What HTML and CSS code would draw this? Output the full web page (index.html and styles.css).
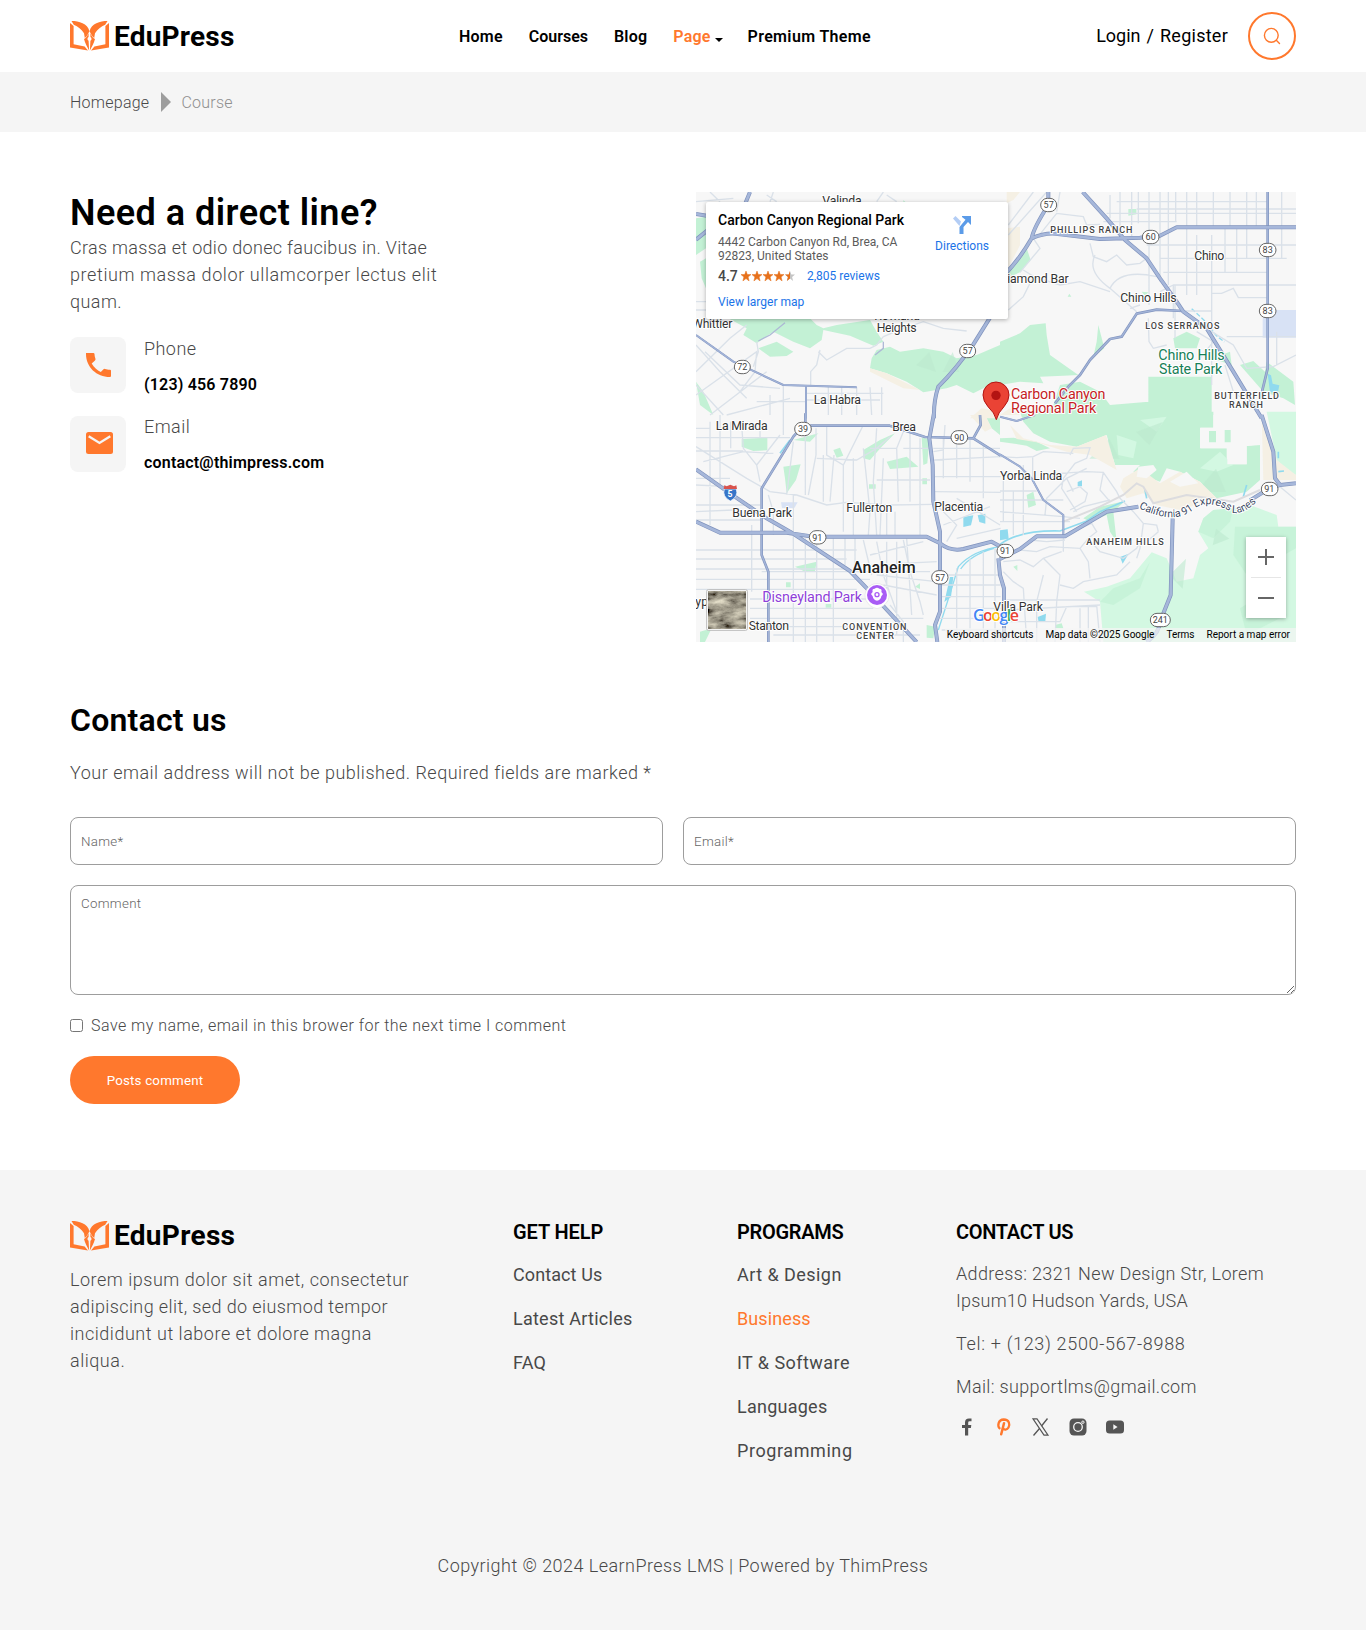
FILE: index.html
```html
<!DOCTYPE html>
<html lang="en">
<head>
<meta charset="utf-8">
<title>EduPress - Contact</title>
<link rel="stylesheet" href="styles.css">
</head>
<body>
<svg width="0" height="0" class="defs">
  <symbol id="book" viewBox="0 0 39 30">
    <g id="half" fill="#ff782d">
      <path d="M0 2 3.600 5V23.200L14.600 25.600 18 29.600 0 26.500Z"/>
      <path d="M1.500 0C9 0 17.500 2.500 19.500 10.200 18 12.300 17.500 15 14.800 17L14 12.200C11.500 8.300 8 5.600 3.800 3.800Z"/>
      <path d="M14 18C16.300 17 17.800 14.500 18.600 12V16.100A2 2 0 0 0 18.600 19.700L19.100 29.500C17.300 26 15 22 14 18Z"/>
    </g>
    <use href="#half" transform="matrix(-1 0 0 1 39 0)"/>
  </symbol>
</svg>

<header class="header container">
  <a class="logo"><svg class="logo-mark" viewBox="0 0 39 30"><use href="#book"/></svg><span>EduPress</span></a>
  <nav class="nav">
    <a class="home">Home</a><a class="courses">Courses</a><a>Blog</a><a class="active">Page<i class="caret"></i></a><a class="premium">Premium Theme</a>
  </nav>
  <div class="account">
    <span class="login">Login</span><span class="slash">/</span><span class="register">Register</span>
    <button class="search" aria-label="Search"><svg width="18" height="18" viewBox="0 0 18 18" fill="none" stroke="#ff782d" stroke-width="1.4" stroke-linecap="round"><circle cx="8.300" cy="8.300" r="6.900"/><path d="M13.300 13.300 16.500 16.500"/></svg></button>
  </div>
</header>

<div class="crumbs">
  <div class="container crumbs-row"><a>Homepage</a><i class="arrow"></i><span>Course</span></div>
</div>

<main class="container">
  <section class="intro">
    <div class="direct">
      <h1>Need a direct line?</h1>
      <p><span class="l1">Cras massa et odio donec faucibus in. Vitae</span><br><span class="l2">pretium massa dolor ullamcorper lectus elit</span><br>quam.</p>
      <div class="way">
        <div class="way-icon"><svg width="25" height="24" viewBox="0 0 25 24" fill="#ff782d"><path d="M0 0H7.500Q8.300 0 8.500 1C8.600 3 9 4.500 9.500 6Q9.600 6.900 9 7.400L5.700 10.400C8 14.400 11 17 14.800 18.900L17.500 16.200Q18.200 15.600 19 15.900C20.600 16.400 22 16.600 24 16.700Q25 16.800 25 17.700V23Q25 24 24 24C10.500 24 0 14 0 1Z"/></svg></div>
        <div class="way-text"><span class="phone">Phone</span><b>(123) 456 7890</b></div>
      </div>
      <div class="way">
        <div class="way-icon mail"><svg width="27" height="22" viewBox="0 0 27 22"><rect width="27" height="22" rx="2.500" fill="#ff782d"/><path d="M2.700 4.200 13.500 11 24.300 4.200" fill="none" stroke="#f5f5f5" stroke-width="2.300"/></svg></div>
        <div class="way-text"><span class="phone">Email</span><b>contact@thimpress.com</b></div>
      </div>
    </div>

    <div class="map">
      <svg class="map-art" width="600" height="450" viewBox="0 0 1800 1350">
        <defs>
          <filter id="terrain" x="0" y="0" width="1" height="1"><feTurbulence type="fractalNoise" baseFrequency=".02 .045" numOctaves="5" seed="8"/><feColorMatrix values="1.1 0 0 0 -.2  1.05 0 0 0 -.2  .85 0 0 0 -.17  0 0 0 0 1"/></filter>
          <path id="a-hw" d="M180 21 160 70M18 87 60 94M18 164 60 130M900 398 850 478Q800 550 745 605 730 650 732 700"/>
          <path id="b-hw" d="M145 21V60Q100 130 95 160 60 220 20 262M95 160Q140 140 180 148L300 162 420 158 480 152 530 127H888M248 21 320 100 375 165 440 220 480 280 530 350 550 380 620 430 700 560 785 700"/>
          <path id="c-hw" d="M732 -5 718 70 728 150 730 260 750 350V590L735 630 742 681M18 320 90 353H290L370 365H710L750 385Q780 410 820 402L905 380 932 395M18 163 120 235 230 310 300 350 480 468 540 530 680 681"/>
          <path id="d-hw" d="M0 432 60 402 110 364H195L320 290 415 275M888 205 840 210 800 225 750 256M785 0 820 110 825 190 842 212M518 310 512 540 480 620Q478 655 440 681M-5 430 0 480 12 520V681"/>
          <path id="a-rt" d="M18 450 130 530 280 600 500 607M348 605V700"/>
          <path id="b-rt" d="M550 378 470 374 410 386 365 455 330 462 270 525 240 570 205 605 165 655M803 21V550L780 645"/>
          <path id="c-rt" d="M346 -5V35M600 32H350Q330 40 310 65L215 220V420L235 470V681M600 32 640 45 705 66 850 70 932 122M870 0 872 30 850 70"/>
          <path id="d-rt" d="M0 118 60 155 95 190 130 255 190 300V365M105 0 90 5 50 18 0 5"/>
        </defs>
        <rect width="1800" height="1350" fill="#f7f7f7"/>

        <!-- land cover -->
        <g fill="#c3f1d5">
          <g transform="translate(-18 -21)">
            <path d="M115 400H360L380 420 400 430 440 420 540 405 560 440 580 470 550 482 480 452 400 435 395 465 360 490 310 470 250 440 200 475 160 450 170 430ZM205 490 260 470 310 500 290 513 240 515ZM18 100 48 95V190L18 210ZM30 230 48 220V310L35 280ZM545 520 560 495 600 485 630 500 700 490 760 500 800 520 860 510 930 480V590L900 600 850 625 800 600 770 610 700 622 650 590 590 565 540 550ZM640 45 655 60 640 75ZM18 590 40 620 70 690 30 660Z"/>
          </g>
          <g transform="translate(912 -21)">
            <path d="M0 470 60 445 90 420 137 415 140 450 150 510 235 570 190 572 120 575 130 595 60 590 0 600ZM295 420 313 490 280 515 290 470ZM520 460 560 440 600 460 590 490 525 490ZM445 575H635V700H445ZM180 600 240 590 300 620 330 660 445 650V700H120L160 660ZM635 520 690 500 695 540ZM720 540 760 528 795 560 800 530 840 560 880 590 885 660 850 640 790 620ZM20 262 80 190 92 225 60 262 30 275ZM385 72H409V88L385 92ZM425 320 445 322 435 332ZM203 335 208 326 214 335Z"/>
          </g>
          <g transform="translate(-18 669)">
            <path d="M155 72 232 68V106L190 108 155 95ZM430 105 450 98 460 122 440 128ZM520 105 570 75 615 55 575 95 540 135 520 130ZM590 140 650 125 685 155 600 162ZM280 155 332 148 318 195 290 235 285 190ZM310 75 385 55 360 80ZM695 68 718 72 712 145 700 150ZM697 190H711V208H697ZM537 208H557V221H537ZM315 455 380 440 375 468 345 470ZM288 502H302V517H288ZM407 567H424V578H407ZM30 650 65 640 45 681H30ZM710 630 735 635 730 670 710 668ZM675 515 690 505V522ZM885 0H930V60L905 40Z"/>
          </g>
          <g transform="translate(912 669)">
            <path d="M60 -10H640V38H600V100H680V148H740V93L780 88V195L740 230 650 250 600 200 540 170 500 160 480 200 400 170 420 150 345 150 320 60 230 95 150 80 100 55 70 20ZM0 70 40 68 110 80 150 100 110 108 80 92 0 80ZM80 240 100 230 108 270 85 278ZM250 310 300 275 375 258 340 290 350 380 330 350 320 300 270 320ZM40 455 52 450V468ZM165 630 185 625 190 640H165Z"/>
          </g>
        </g>
        <g fill="#d3f8e2" transform="translate(912 669)">
          <path d="M800 -10H888V180L860 165 830 135ZM595 350 610 310 640 285 700 280 750 270 830 300 835 335H888V681H310L300 560 252 530 320 515 390 490 455 412 500 430 530 500 580 490 600 420 625 400Z"/>
          <path d="M350 60 410 80 400 130 355 120ZM420 15 500 5 470 50ZM660 110 700 150 650 170 600 160Z"/>
        </g>
        <g fill="#c3f1d5" transform="translate(912 669)"><path d="M705 335H888V400L800 450 740 480 700 420ZM595 350 610 310 640 285 700 280 690 320 640 370ZM300 560 340 520 420 490 450 440 420 520 340 570ZM720 580 800 530 860 600 740 660Z" opacity=".75"/></g>
        <g fill="#bce9ce" opacity=".6"><path d="M660 520 700 480 720 540ZM740 540 770 480 790 540ZM1180 800 1240 740 1270 800ZM1320 720 1400 690 1360 760ZM1500 900 1560 830 1590 900ZM1420 1150 1470 1100 1460 1190ZM1560 1010 1600 1040 1550 1060Z"/></g>
        <g fill="#f5f0e4">
          <path transform="translate(912 -21)" d="M20 21H60L40 45 20 55ZM20 130 60 125V180L25 250ZM0 690 30 670 60 690Z"/>
          <path transform="translate(-18 -21)" d="M540 550 590 565 690 615 640 610 540 560ZM875 670 930 680V700H840Z"/>
          <path transform="translate(-18 669)" d="M840 0H885L905 40 885 50Z"/>
          <path transform="translate(912 669)" d="M30 30 70 70 150 90 230 95 318 60 345 150 350 165 270 120 200 110 110 82 50 72ZM370 190 420 160 480 205 540 170 600 200 650 250 540 285 470 270 430 235 380 250 360 215ZM785 5 830 135 888 180V195H790Z"/>
        </g>
        <path transform="translate(912 669)" fill="#f7f7f7" d="M415 155 460 150 470 165 440 190 410 185ZM510 200 560 170 595 205 540 215ZM640 0H782V90L740 93V148H682V100H602V38H640Z"/>
        <path transform="translate(912 669)" fill="#c3f1d5" d="M627 48H648V82H627ZM674 45H692V82H674Z"/>
        <path fill="#d8e2f5" d="M1717 354H1800V437H1700V380Z"/>
        <path fill="#d8e2f5" d="M255 931H305L295 948H258Z"/>
        <g fill="none" stroke="#90daee" stroke-width="5" transform="translate(-18 669)"><path d="M932 395Q850 405 805 455L782 530 745 645M912 400Q840 420 812 462" stroke-width="4"/><path d="M300 75 270 115" /></g>
        <g fill="none" stroke="#90daee" stroke-width="5" transform="translate(912 669)"><path d="M0 388Q60 345 180 348L260 318 300 290 375 258M740 210 730 245M835 110V130M835 170 852 168M435 225 440 250"/></g>
        <path fill="#90daee" d="M802 975 832 970 825 1000 802 1005ZM845 970 868 965V995L850 990ZM762 1155 772 1155 765 1215 745 1230ZM912 1015 935 1012 938 1040 912 1045ZM1145 870 1158 865V883H1145ZM1272 1095 1298 1085 1280 1115ZM1025 1275 1050 1265 1048 1288 1028 1290ZM1715 545 1725 550 1730 575 1750 580 1745 605 1722 600Z"/>
        <path fill="none" stroke="#90daee" stroke-width="4" stroke-dasharray="14 6" d="M1487 350 1530 390 1560 430 1585 450"/>

        <!-- local streets -->
        <g fill="none" stroke="#dae1e9" stroke-width="4">
          <g transform="translate(-18 -21)"><path d="M18 350H48M18 375H48M18 480 90 560 170 640M18 560 120 460 170 420M18 630 200 500 195 560 150 620M45 500 150 600 270 610M60 690 230 560M18 600 100 690M200 470 205 500 190 545M390 495 380 540 362 560V605M385 500 410 525 470 490H540L560 480 580 455M580 455 640 430 700 410 760 430 830 438M415 605V690M455 605V690M500 607V690M575 607V690M540 607 545 690M350 625H580M350 645H570M240 630V690M280 600V690M200 650H345M110 690 300 640M590 30 620 50M230 30 260 50M250 21 240 50M18 50 130 40M60 21 90 50M580 21 560 50"/><path d="M205 468 240 450 285 413M580 470V490L555 510" stroke="#aeb9d6"/></g>
          <g transform="translate(912 -21)"><path d="M330 30V100M360 21V150M395 21V160M415 21V115M447 21V360M480 21V290M505 21V300M527 21V110M560 21V330M590 21V125M640 21V125M690 21V125M740 21V125M769 21V125M845 21V220M635 150V600M675 130V260M710 130V262M740 130V220M590 150V330M350 50H800M320 85H888M410 72H888M310 110H530M440 180H888M480 220H860M490 262H800M520 300H888M480 320 520 300V400M560 300V330M635 325H665L700 310 715 338H800M550 378H635M270 175 280 215 320 230 350 210 380 240 420 235 440 220M285 210Q260 260 330 310L410 380M330 310Q360 250 470 275M25 375 70 335 100 275 180 300 240 290 330 320M60 262 120 190 100 160M70 255 110 280M110 160 170 85 250 95 260 120 300 118M180 21 170 80M25 120 100 21M25 150 140 21M445 400 447 470 460 490 500 480M525 300V460M635 440 700 480 740 550 820 545 888 510M675 540 700 620 740 650M680 455H888M830 440V540M590 440 640 470 600 520M390 370 420 360"/></g>
          <g transform="translate(-18 669)"><path d="M18 40H60M18 68H300M18 108H160M40 140 160 110 250 115M18 190H120M18 210 120 215M18 270H210M18 290 130 285M18 315H215M18 405H500M18 432H470M18 462H470M18 493H540M18 523H500M180 552H560M180 580H550M180 610H700M180 635H640M250 660H690M60 20V330M90 0V220M122 20V100M155 30 160 100 200 150 210 200M185 330V530M215 470H720M18 95 170 190 240 230 320 240 410 270 470 262 600 270 730 268M200 150 270 60M235 240 250 290V360M280 0V60M310 80 290 240M310 240V681M346 40V240M346 370V681M378 40V120L355 240M380 380V681M410 30V120L460 150 520 30M400 120V260M432 120 420 260M460 150V350M465 370V450M430 370V681M490 130V360M495 370V460M520 100 540 290 535 360M560 40 550 200 560 360M580 130 570 360M590 290V360M615 290V360M640 50 620 100 625 260M660 50V260M690 70V360M540 100H620M600 65 560 100 500 135 380 130M640 100 720 100M720 195H560M730 110 760 105 765 30M760 70V190M800 70V190M840 75V200M880 85V250M730 100H930M730 135 932 125M735 185H932M735 230 932 232M740 270 800 330 770 380M800 250 930 330M760 330 900 275M800 370 932 340M590 380V560M620 380V660M560 380 580 480 620 590M520 375 545 480M640 375 660 470 690 560 700 600M540 420 700 380M545 450 740 440M560 480 740 500M580 510 740 540M650 370 665 600M770 480H932M755 510H932M755 545H932M755 580H932M750 610H932M755 645H932M800 460V681M840 430V681M880 410V681M915 400V681M640 681V620L600 570M210 20V70"/></g>
          <g transform="translate(912 669)"><path d="M0 125 50 128 100 125 130 110 220 115M0 228H110M0 255H190M0 290 190 305 240 310M0 320H210M10 180V320M40 230V360M70 150V360M98 125V200M100 195 150 190 180 175 260 170 310 172 350 230 360 250M135 300 140 250 200 190M210 120 220 100 270 98 260 130 225 145 190 190 185 220 230 290M200 230 240 215 262 235 255 260 210 285M220 230 200 190 260 160M310 172 300 225 330 260M330 255 250 275 220 290M360 250 400 290 430 325 470 330 475 350M430 325 420 400 410 430M240 340 275 325 290 350 265 370 300 410 370 430 410 400 425 370M90 375 140 380 195 375M60 405 110 410 150 395 240 400 265 370M10 440 60 435 100 455 130 430 185 410M130 430 180 480 170 560M190 370V410M240 400 265 440 270 490M180 510 220 520 250 500 350 480 390 440M10 470 40 500 70 520M20 555H300M20 585 300 570M20 620H180L200 575H290M70 520 80 681M130 480 110 560V681M170 560 165 681M240 580V681M265 575V681M290 570 300 681M840 215 888 255M475 350 440 380"/></g>
        </g>
        <g fill="none" stroke="#dcdcdf" stroke-width="6" transform="translate(912 669)"><path d="M190 320 300 275 370 240 410 205 430 215 460 265 560 240 700 260 780 225"/></g>

        <!-- highways -->
        <g fill="none" stroke-linejoin="round">
          <g stroke="#8295bf" stroke-width="6"><use href="#a-rt" x="-18" y="-21"/><use href="#b-rt" x="912" y="-21" stroke-width="8"/><use href="#c-rt" x="-18" y="669" stroke-width="8"/><use href="#d-rt" x="912" y="669"/></g>
          <g stroke="#a3b4d8" stroke-width="4"><use href="#a-rt" x="-18" y="-21"/><use href="#b-rt" x="912" y="-21"/><use href="#c-rt" x="-18" y="669"/><use href="#d-rt" x="912" y="669"/></g>
          <g stroke="#8093bd" stroke-width="12"><use href="#a-hw" x="-18" y="-21"/><use href="#b-hw" x="912" y="-21"/><use href="#c-hw" x="-18" y="669"/><use href="#d-hw" x="912" y="669"/></g>
          <g stroke="#a6b7da" stroke-width="8"><use href="#a-hw" x="-18" y="-21"/><use href="#b-hw" x="912" y="-21"/><use href="#c-hw" x="-18" y="669"/><use href="#d-hw" x="912" y="669"/></g>
        </g>

        <!-- route shields -->
        <g class="shield" transform="translate(-18 -21)"><rect x="133" y="526" width="48" height="40" rx="20"/><text x="157" y="556">72</text><rect x="809" y="478" width="48" height="40" rx="20"/><text x="833" y="508">57</text></g>
        <g class="shield" transform="translate(912 -21)"><rect x="122" y="40" width="48" height="40" rx="20"/><text x="146" y="70">57</text><rect x="427" y="136" width="50" height="40" rx="20"/><text x="452" y="166">60</text><rect x="778" y="175" width="50" height="40" rx="20"/><text x="803" y="205">83</text><rect x="778" y="358" width="50" height="40" rx="20"/><text x="803" y="388">83</text></g>
        <g class="shield" transform="translate(-18 669)"><rect x="314" y="22" width="50" height="40" rx="20"/><text x="339" y="52">39</text><rect x="783" y="47" width="50" height="40" rx="20"/><text x="808" y="77">90</text><rect x="358" y="347" width="50" height="40" rx="20"/><text x="382" y="377">91</text><rect x="725" y="467" width="49" height="40" rx="20"/><text x="750" y="497">57</text></g>
        <g class="shield" transform="translate(912 669)"><rect x="-9" y="388" width="50" height="40" rx="20"/><text x="15" y="418">91</text><rect x="784" y="202" width="50" height="40" rx="20"/><text x="808" y="232">91</text><rect x="451" y="595" width="60" height="40" rx="20"/><text x="481" y="625">241</text></g>
        <g transform="translate(-18 669)"><path d="M103 222H139Q146 245 121 258 96 245 103 222Z" fill="#3775c8" stroke="#fff" stroke-width="2"/><path d="M101 222 103 211 110 214 121 209 132 214 139 211 141 222Z" fill="#d9534d"/><text class="i5" x="120" y="246">5</text></g>

        <!-- place names -->
        <g class="town" transform="translate(-18 -21)"><text x="397" y="60" textLength="118">Valinda</text><text x="6" y="430" textLength="121">Whittier</text><text x="553" y="406" textLength="137">Rowland</text><text x="560" y="442" textLength="120">Heights</text><text x="371" y="658" textLength="142">La Habra</text></g>
        <g class="town" transform="translate(912 -21)"><text x="-2" y="295" textLength="208">Diamond Bar</text><text x="583" y="225" textLength="90">Chino</text><text x="361" y="352" textLength="169">Chino Hills</text></g>
        <g class="town" transform="translate(-18 669)"><text x="77" y="45" textLength="156">La Mirada</text><text x="607" y="48" textLength="71">Brea</text><text x="127" y="306" textLength="179">Buena Park</text><text x="469" y="291" textLength="138">Fullerton</text><text x="733" y="289" textLength="147">Placentia</text><text x="-8" y="574">Cypress</text><text x="176" y="645" textLength="121">Stanton</text></g>
        <g class="town" transform="translate(912 669)"><text x="0" y="196" textLength="187">Yorba Linda</text><text x="-20" y="588" textLength="149">Villa Park</text></g>
        <g class="area"><text x="1063" y="122" textLength="246">PHILLIPS RANCH</text><text x="1348" y="412" textLength="222">LOS SERRANOS</text><text x="1555" y="621" textLength="194">BUTTERFIELD</text><text x="1599" y="648" textLength="102">RANCH</text><text x="1171" y="1060" textLength="232">ANAHEIM HILLS</text><text x="439" y="1314" textLength="192">CONVENTION</text><text x="481" y="1341" textLength="113">CENTER</text></g>
        <text class="city" x="468" y="1142" textLength="191">Anaheim</text>
        <g class="park"><text x="1387" y="504" textLength="199">Chino Hills</text><text x="1389" y="547" textLength="190">State Park</text></g>
        <g class="pin-label"><text x="945" y="621" textLength="283">Carbon Canyon</text><text x="945" y="663" textLength="256">Regional Park</text></g>
        <text class="disney" x="199" y="1230" textLength="299">Disneyland Park</text>
        <path id="lane" d="M1328 948Q1430 1000 1490 955 1530 915 1610 962 1650 970 1705 905" fill="none"/>
        <text class="express"><textPath href="#lane" textLength="382">California 91 Express Lanes</textPath></text>

        <!-- place markers -->
        <path d="M543 1250Q520 1245 510 1225A36 36 0 1 1 576 1225Q566 1245 543 1250Z" fill="#fff" stroke="#ccc" stroke-width="1"/><circle cx="543" cy="1209" r="30" fill="#a95cf5"/><path d="M530 1200Q527 1190 536 1190 543 1184 550 1190 559 1190 556 1200L561 1206 556 1213Q554 1225 543 1226 532 1225 530 1213L525 1206Z" fill="#fff"/><circle cx="543" cy="1208" r="8" fill="#a95cf5"/><circle cx="543" cy="1208" r="4" fill="#fff"/>
        <path d="M901 683Q896 662 876 644 861 627 861 609A39 39 0 1 1 939 609Q939 627 924 644 906 662 901 683Z" fill="#ea4335" stroke="#b31412" stroke-width="3"/><circle cx="900" cy="610" r="14" fill="#b31412"/>

        <!-- satellite toggle -->
        <rect x="32" y="1193" width="122" height="122" rx="5" fill="#fff" stroke="#bbb" stroke-width="3"/><rect x="37" y="1198" width="112" height="112" filter="url(#terrain)"/>

        <text class="google" x="831" y="1286" textLength="138"><tspan fill="#4285f4">G</tspan><tspan fill="#ea4335">o</tspan><tspan fill="#fbbc04">o</tspan><tspan fill="#4285f4">g</tspan><tspan fill="#34a853">l</tspan><tspan fill="#ea4335">e</tspan></text>
      </svg>

      <div class="place">
        <div class="place-main">
          <div class="place-name">Carbon Canyon Regional Park</div>
          <div class="place-address">4442 Carbon Canyon Rd, Brea, CA<br>92823, United States</div>
          <div class="rating"><span>4.7</span><svg width="54" height="11" viewBox="0 0 54 11"><defs><path id="star" d="M5 0 6.300 3.600H10L7.100 6 8.100 9.900 5 7.600 1.900 9.900 2.900 6 0 3.600H3.700Z"/></defs><g fill="#e7711b" stroke="#e7711b" stroke-width=".5"><use href="#star"/><use href="#star" x="11"/><use href="#star" x="22"/><use href="#star" x="33"/></g><use href="#star" x="44" fill="#c4c4c4"/><path fill="#e7711b" d="M49 0V7.600L45.900 9.900 46.900 6 44 3.600H47.700Z"/></svg><a>2,805 reviews</a></div>
          <a class="larger">View larger map</a>
        </div>
        <div class="directions"><svg width="18" height="18" viewBox="0 0 18 18"><path d="M0 2.500 2.500 0 8 5.600 6.500 10Z" fill="#b3cdf5"/><path d="M6.500 18V11L12.500 3.700 9 1V0H18V9L15 6 10.500 11V18Z" fill="#5b9be8"/></svg><a>Directions</a></div>
      </div>
      <div class="zoom"><button aria-label="Zoom in"><svg width="16" height="16"><path d="M0 8H16M8 0V16" stroke="#666" stroke-width="2"/></svg></button><button aria-label="Zoom out"><svg width="16" height="16"><path d="M0 8H16" stroke="#666" stroke-width="2"/></svg></button></div>
      <div class="legal"><span>Keyboard shortcuts</span><span>Map data ©2025 Google</span><span>Terms</span><span>Report a map error</span></div>
    </div>
  </section>

  <section class="contact">
    <h2>Contact us</h2>
    <p>Your email address will not be published. Required fields are marked *</p>
    <form>
      <div class="fields"><input type="text" placeholder="Name*"><input type="text" placeholder="Email*"></div>
      <textarea placeholder="Comment"></textarea>
      <label><input type="checkbox"><span>Save my name, email in this brower for the next time I comment</span></label>
      <button type="button" class="submit">Posts comment</button>
    </form>
  </section>
</main>

<footer class="footer">
  <div class="container footer-grid">
    <div>
      <a class="logo"><svg class="logo-mark" viewBox="0 0 39 30"><use href="#book"/></svg><span>EduPress</span></a>
      <p class="about">Lorem ipsum dolor sit amet, consectetur<br><span class="tight">adipiscing elit, sed do eiusmod tempor</span><br>incididunt ut labore et dolore magna<br>aliqua.</p>
    </div>
    <div><h3>GET HELP</h3><ul><li class="help">Contact Us</li><li>Latest Articles</li><li>FAQ</li></ul></div>
    <div><h3 class="programs">PROGRAMS</h3><ul><li class="art">Art &amp; Design</li><li class="active">Business</li><li class="art">IT &amp; Software</li><li>Languages</li><li class="prog">Programming</li></ul></div>
    <div class="reach">
      <h3 class="programs">CONTACT US</h3>
      <p>Address: 2321 New Design Str, Lorem<br><span class="street">Ipsum10 Hudson Yards, USA</span></p>
      <p class="tel">Tel: + (123) 2500-567-8988</p>
      <p>Mail: supportlms@gmail.com</p>
      <div class="social">
        <svg width="22" height="18" viewBox="0 0 22 18" fill="#555"><path d="M9 17.500V10H6V7H9V4.500Q9 .5 13 .5H15.500V3.300H13.500Q12.200 3.300 12.200 4.600V7H15.300L14.900 10H12.200V17.500Z"/></svg>
        <svg width="22" height="18" viewBox="0 0 22 18" fill="none" stroke="#ff782d" stroke-linecap="round"><path d="M6.500 10.300C4.500 8 4.800 1.800 10.800 1.500 16.500 1.500 17 6.500 15.500 9.500 14.200 12 11 12.200 10 10.300" stroke-width="2.300"/><path d="M11 5.300 8.200 16.300" stroke-width="2.500"/></svg>
        <svg width="22" height="18" viewBox="0 0 22 18" fill="none" stroke="#555"><path d="M3 .8H7L18 17.200H14Z" stroke-width="1.200"/><path d="M17.500 .5 11.500 8M9.500 10.500 3.500 17.500" stroke-width="1.300"/></svg>
        <svg width="22" height="18" viewBox="0 0 22 18"><rect x="2.500" y=".5" width="17" height="17" rx="4.500" fill="#555"/><circle cx="11" cy="9" r="4.300" fill="none" stroke="#f5f5f5" stroke-width="1.300"/><circle cx="15.900" cy="4.200" r="1.200" fill="none" stroke="#f5f5f5"/></svg>
        <svg width="22" height="18" viewBox="0 0 22 18"><rect x="2" y="2.500" width="18" height="13" rx="3.500" fill="#555"/><path d="M9.300 6.300V11.700L13.600 9Z" fill="#f5f5f5"/></svg>
      </div>
    </div>
  </div>
  <p class="copyright">Copyright © 2024 LearnPress LMS | Powered by ThimPress</p>
</footer>
</body>
</html>
```
FILE: styles.css
```css
* { box-sizing: border-box; }
body, h1, h2, h3, p, ul { margin: 0; padding: 0; }
body { background: #fff; color: #484848; font: 300 18px/27px Roboto, sans-serif; letter-spacing: .45px; }
ul { list-style: none; }
button { padding: 0; font-family: inherit; }
.defs { position: absolute; }
.container { width: 1226px; margin: 0 auto; }

/* header */
.header { display: grid; grid-template-columns: 389px 1fr auto; align-items: center; height: 72px; }
.logo { display: flex; align-items: center; gap: 5px; height: 30px; color: #000; font-size: 28px; font-weight: 700; letter-spacing: .2px; }
.logo-mark { width: 39px; height: 30px; }
.nav { display: flex; align-items: center; padding-top: 1px; font-size: 16px; font-weight: 600; letter-spacing: .2px; color: #000; line-height: 24px; }
.nav a { margin-right: 26px; }
.nav .courses { letter-spacing: 0; }
.nav .premium { margin: 0; letter-spacing: .36px; }
.active { color: #ff782d; }
.nav .active { display: flex; align-items: center; margin-right: 25px; }
.caret { margin: 6px 0 0 4px; border: 4px solid transparent; border-top-color: #000; border-bottom: 0; }
.account { display: flex; align-items: center; color: #000; font-weight: 400; letter-spacing: 0; }
.account span { margin-top: -2px; }
.account .slash { margin: -2px 6px 0; }
.register { letter-spacing: .26px; }
.search { display: flex; align-items: center; justify-content: center; width: 48px; height: 48px; margin-left: 20px; border: 2px solid #ff782d; border-radius: 50%; background: none; }

.crumbs { background: #f5f5f5; }
.crumbs-row { display: flex; align-items: center; height: 60px; font-size: 16px; letter-spacing: .25px; }
.crumbs-row span { color: #8f8f8f; }
.arrow { margin: 0 10px 0 12px; border: 10px solid transparent; border-left-color: #9d9d9d; border-right: 0; }

/* intro */
.intro { display: flex; justify-content: space-between; padding-top: 60px; }
h1 { color: #000; font-size: 36px; font-weight: 600; line-height: 42px; letter-spacing: .47px; }
.direct .l1 { letter-spacing: .3px; }
.direct .l2 { letter-spacing: .6px; }
.way { display: flex; gap: 18px; margin-top: 20px; }
.way + .way { margin-top: 17px; }
.way-icon { display: flex; align-items: center; justify-content: center; width: 56px; height: 56px; margin-top: 2px; border-radius: 8px; background: #f5f5f5; }
.way-icon.mail { margin-top: 3px; padding: 0 0 2px 3px; }
.way-text { display: flex; flex-direction: column; gap: 11px; height: 61px; }
.way-text b { color: #000; font-size: 16px; font-weight: 600; line-height: 24px; letter-spacing: .19px; }

/* map */
.map { position: relative; width: 600px; height: 450px; overflow: hidden; font-family: Roboto, sans-serif; letter-spacing: 0; }
.map-art { display: block; }
.map-art text { paint-order: stroke; stroke: #fff; stroke-width: 6px; stroke-linejoin: round; font-weight: 400; }
.town text { fill: #333; font-size: 37px; }
.area text { fill: #444; font-size: 27px; font-weight: 500; }
.map-art .city { fill: #222; font-size: 48px; font-weight: 500; }
.park text { fill: #188058; font-size: 43px; }
.pin-label text { fill: #c5221f; font-size: 43px; }
.map-art .disney { fill: #8f3fd9; font-size: 43px; }
.map-art .express { fill: #3c4a63; font-size: 32px; }
.shield rect { fill: #fff; stroke: #666; stroke-width: 3px; }
.shield text { fill: #444; font-size: 27px; text-anchor: middle; stroke: none; }
.map-art .i5 { fill: #fff; stroke: none; font-size: 26px; font-weight: 700; text-anchor: middle; }
.map-art .google { font-family: "Open Sans", sans-serif; font-size: 48px; font-weight: 600; }
.place { position: absolute; left: 10px; top: 10px; display: flex; justify-content: space-between; width: 302px; height: 117px; padding: 9px 19px 0 12px; background: #fff; border-radius: 2px; box-shadow: 0 1px 4px rgba(0, 0, 0, .3); font-size: 12px; font-weight: 400; line-height: 14px; }
.place a { color: #1a73e8; }
.place-name { color: #000; font-size: 14px; font-weight: 500; line-height: 18px; white-space: nowrap; }
.place-address { margin-top: 6px; color: #5b5b5b; }
.rating { display: flex; align-items: center; height: 20px; margin-top: 3px; }
.rating span { width: 23px; font-size: 14px; font-weight: 500; }
.rating a { margin-left: 12px; }
.larger { display: block; margin-top: 9px; }
.directions { display: flex; flex-direction: column; align-items: center; gap: 5px; padding-top: 5px; }
.zoom { position: absolute; right: 10px; top: 345px; width: 40px; height: 81px; padding: 0 5px; background: #fff; box-shadow: 0 1px 4px rgba(0, 0, 0, .3); }
.zoom button { display: flex; align-items: center; justify-content: center; width: 30px; height: 40px; border: 0; background: none; }
.zoom button + button { height: 41px; border-top: 1px solid #e6e6e6; }
.legal { position: absolute; right: 0; bottom: 0; display: flex; gap: 12px; height: 14px; padding: 0 6px 0 2px; background: rgba(245, 245, 245, .7); color: #000; font-size: 10px; font-weight: 400; line-height: 14px; white-space: nowrap; }

/* contact form */
.contact { padding: 58px 0 66px; }
h2 { color: #000; font-size: 32px; font-weight: 600; line-height: 40px; letter-spacing: .22px; }
.contact p { margin: 19px 0 31px; letter-spacing: .5px; }
.fields { display: flex; gap: 20px; margin-bottom: 20px; }
.fields input { width: 593px; height: 48px; }
.fields input + input { width: 613px; }
.fields input, textarea { padding: 0 10px; border: 1px solid #9d9d9d; border-radius: 8px; background: #fff; font: 300 13.333px/20px Roboto, sans-serif; letter-spacing: .3px; }
textarea { display: block; width: 100%; height: 110px; padding-top: 8px; }
::placeholder { color: #666; opacity: 1; }
label { display: flex; align-items: center; gap: 8px; height: 24px; margin: 18px 0 19px; font-size: 16px; letter-spacing: .48px; }
label input { width: 13px; height: 13px; margin: 0; }
.submit { display: block; width: 170px; height: 48px; border: 0; border-radius: 24px; background: #ff782d; color: #fff; font-size: 13.333px; font-weight: 400; letter-spacing: .2px; }

/* footer */
.footer { height: 460px; padding-top: 51px; background: #f5f5f5; }
.footer-grid { display: grid; grid-template-columns: 443px 224px 219px 1fr; height: 331px; }
.footer .logo span { margin-top: -1px; letter-spacing: .3px; }
.about { margin-top: 15px; letter-spacing: .52px; }
.about .tight { letter-spacing: .4px; }
.about, .reach p { white-space: nowrap; }
h3 { margin: -1px 0 17px; color: #000; font-size: 20px; font-weight: 600; line-height: 24px; letter-spacing: -.1px; }
.programs { letter-spacing: -.3px; }
li { margin-bottom: 17px; font-weight: 400; letter-spacing: .25px; }
li.help { letter-spacing: .1px; }
li.active { letter-spacing: .1px; }
li.art { letter-spacing: .45px; }
li.prog { letter-spacing: .58px; }
.reach h3 { margin-bottom: 16px; }
.reach p { margin-bottom: 16px; letter-spacing: .35px; }
.reach .street { letter-spacing: .21px; }
.reach .tel { letter-spacing: .67px; }
.social { display: flex; gap: 15px; margin-top: 18px; }
.copyright { text-align: center; letter-spacing: .45px; }
```
